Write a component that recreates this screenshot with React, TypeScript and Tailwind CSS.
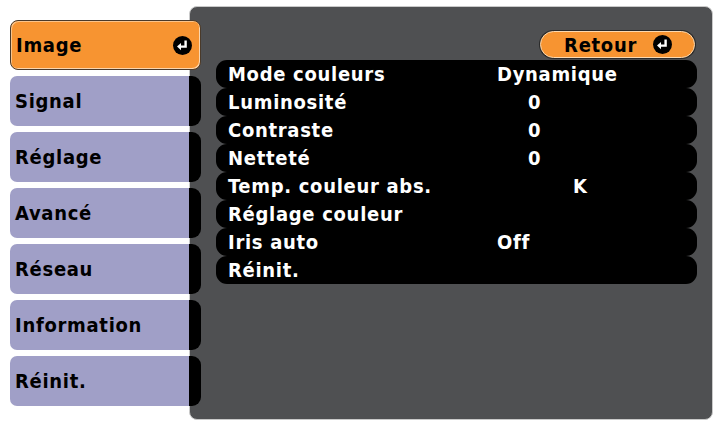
import React from "react";

const TABS = ["Signal", "Réglage", "Avancé", "Réseau", "Information", "Réinit."];

const ROWS: { label: string; value?: string; pad?: string }[] = [
  { label: "Mode couleurs", value: "Dynamique", pad: "pl-0" },
  { label: "Luminosité", value: "0", pad: "pl-[31px]" },
  { label: "Contraste", value: "0", pad: "pl-[31px]" },
  { label: "Netteté", value: "0", pad: "pl-[31px]" },
  { label: "Temp. couleur abs.", value: "K", pad: "pl-[76px]" },
  { label: "Réglage couleur" },
  { label: "Iris auto", value: "Off", pad: "pl-0" },
  { label: "Réinit." },
];

function EnterIcon() {
  // black disc with a white return arrow
  return (
    <svg width="19" height="19" viewBox="0 0 19 19" className="shrink-0">
      <circle cx="9.5" cy="9.5" r="9.5" fill="#000" />
      <path d="M12.6 4.6 V10.6 H7.2" stroke="#fff" strokeWidth="2.4" fill="none" strokeLinejoin="miter" />
      <path d="M4 10.6 L8 7 V14.2 Z" fill="#fff" />
    </svg>
  );
}

export default function App() {
  return (
    <div
      className="w-[723px] h-[423px] bg-white flex text-[20px] tracking-[0.7px] font-bold leading-none"
      style={{ fontFamily: '"DejaVu Sans Condensed", "DejaVu Sans", Verdana, sans-serif' }}
    >
      {/* Left menu tabs */}
      <div className="relative z-10 flex flex-col gap-[6px] pt-[20px] pl-[10px] w-[201px] shrink-0">
        <div className="h-[50px] w-[191px] flex items-center justify-between pl-[5px] pr-[8px] rounded-[8px] bg-[#f79431] border border-[#4a3a2a] shadow-[inset_-1px_-1px_0_#fbd6ae,inset_1px_1px_0_#fbc48a] text-black">
          <span>Image</span>
          <EnterIcon />
        </div>
        {TABS.map((t) => (
          <div key={t} className="h-[50px] w-[191px] flex">
            <div className="flex-1 flex items-center pl-[5px] rounded-l-[7px] bg-[#a09fc7] text-black">{t}</div>
            <div className="w-[12px] bg-black rounded-r-[9px]" />
          </div>
        ))}
      </div>

      {/* Submenu panel */}
      <div className="ml-[-12px] mt-[6px] w-[524px] h-[414px] flex flex-col rounded-[8px] bg-[#4f5052] border border-[#c9c9c9] pt-[24px]">
        <div className="self-end mr-[17px] w-[155px] h-[27px] flex items-center justify-end gap-[16px] pr-[22px] rounded-full bg-[#f79431] border border-[#fcd9b0] shadow-[0_0_0_1px_#2a2a2a] text-black">
          <span>Retour</span>
          <EnterIcon />
        </div>
        <div className="mt-[2px] ml-[26px] mr-[15px] flex flex-col">
          {ROWS.map((r) => (
            <div key={r.label} className="h-[28px] flex items-center pl-[12px] rounded-[11px] bg-black text-white">
              <span className="w-[269px] shrink-0">{r.label}</span>
              {r.value && <span className={r.pad}>{r.value}</span>}
            </div>
          ))}
        </div>
      </div>
    </div>
  );
}
